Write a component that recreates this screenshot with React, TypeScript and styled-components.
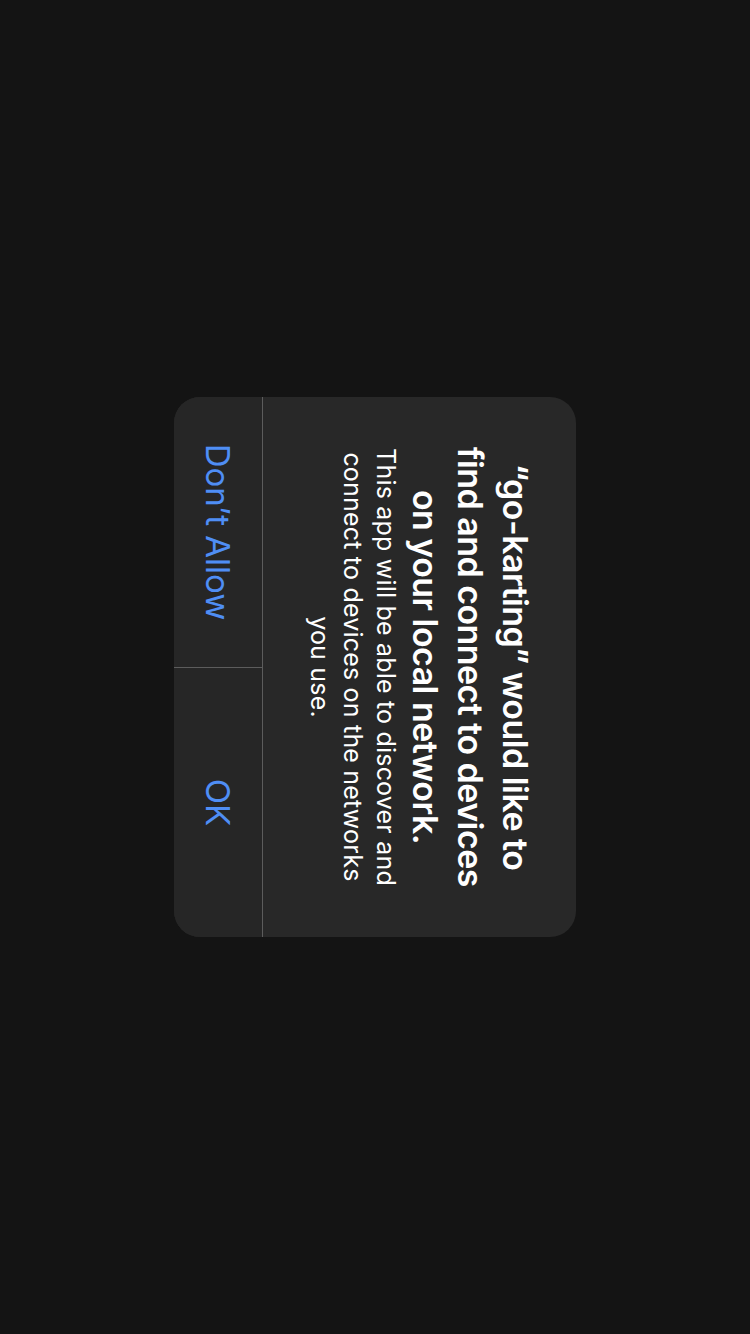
import React from "react";
import styled, { createGlobalStyle } from "styled-components";

const Global = createGlobalStyle`
  html, body { margin: 0; padding: 0; background: #141414; }
  #root { width: 750px; height: 1334px; }
`;

const Screen = styled.div`
  width: 750px;
  height: 1334px;
  background: #141414;
  display: flex;
  align-items: center;
  justify-content: center;
  overflow: hidden;
  font-family: Inter, "Liberation Sans", sans-serif;
`;

const Alert = styled.div`
  width: 540px;
  height: 402px;
  flex: none;
  transform: rotate(90deg);
  background: #282828;
  border-radius: 26px;
  overflow: hidden;
  display: flex;
  flex-direction: column;
  color: #ffffff;
`;

const Content = styled.div`
  flex: 1;
  padding: 38px 20px 0;
  display: flex;
  flex-direction: column;
  align-items: center;
  text-align: center;
`;

const Title = styled.div`
  font-size: 34px;
  line-height: 45px;
  font-weight: 600;
  letter-spacing: -0.55px;
`;

const Message = styled.div`
  font-size: 25px;
  line-height: 33px;
  font-weight: 400;
  letter-spacing: 0.2px;
  margin-top: 1px;
`;

const Buttons = styled.div`
  display: grid;
  grid-template-columns: 270px 1px 1fr;
  border-top: 1px solid #5c5c5c;
  background: #262626;
  height: 88px;
  flex: none;
`;

const Divider = styled.div`
  background: #5c5c5c;
`;

const Button = styled.button`
  border: none;
  background: transparent;
  color: #4f8ef5;
  font-family: Inter, "Liberation Sans", sans-serif;
  font-size: 33px;
  font-weight: 400;
  display: flex;
  align-items: center;
  justify-content: center;
  padding: 0;
  cursor: pointer;
`;

export default function App() {
  return (
    <>
      <Global />
      <Screen>
        <Alert>
          <Content>
            <Title>
              “go-karting” would like to
              <br />
              find and connect to devices
              <br />
              on your local network.
            </Title>
            <Message>
              This app will be able to discover and
              <br />
              connect to devices on the networks
              <br />
              you use.
            </Message>
          </Content>
          <Buttons>
            <Button>Don’t Allow</Button>
            <Divider />
            <Button>OK</Button>
          </Buttons>
        </Alert>
      </Screen>
    </>
  );
}
